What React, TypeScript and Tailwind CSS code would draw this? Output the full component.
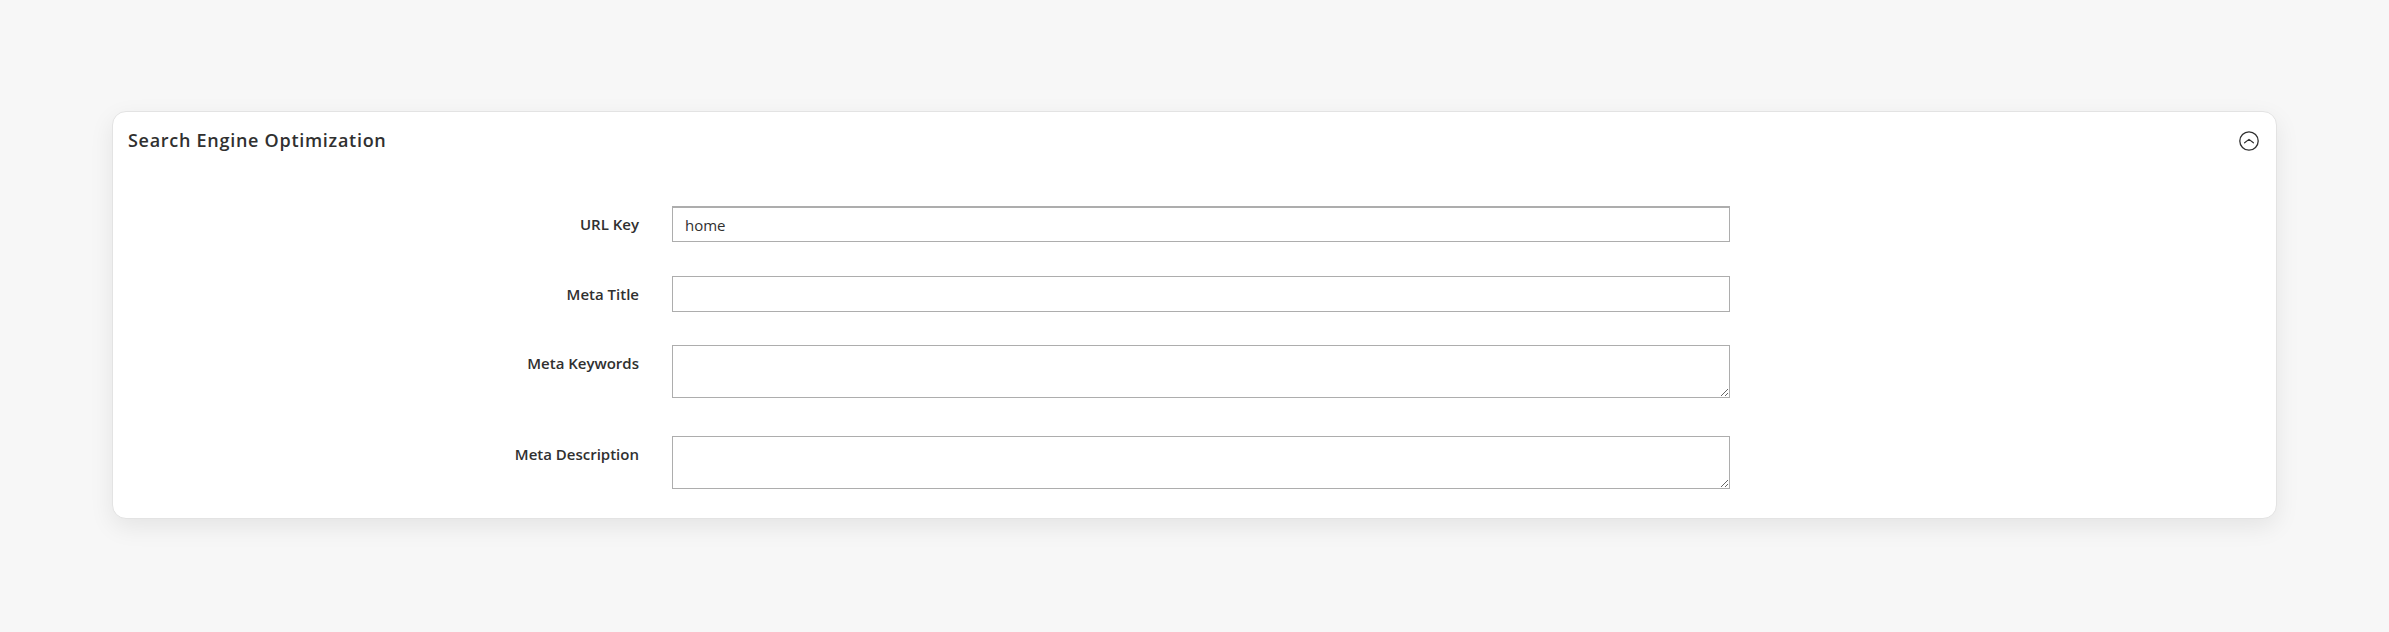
import React from "react";

const labelCls =
  "w-[559px] shrink-0 pr-[33px] text-right text-[15px] leading-[20px] font-semibold text-[#303030]";
const fieldCls =
  "w-[1058px] border border-[#adadad] bg-white px-[12px] text-[15px] text-[#303030] outline-none";

function CollapseIcon() {
  return (
    <svg width="20" height="20" viewBox="0 0 20 20" fill="none" aria-hidden="true">
      <circle cx="10" cy="10" r="9.2" stroke="#303030" strokeWidth="1.3" />
      <polyline
        points="5.6,11.8 10,8.4 14.4,11.8"
        stroke="#303030"
        strokeWidth="1.2"
        strokeLinecap="round"
        strokeLinejoin="round"
      />
    </svg>
  );
}

export default function App() {
  return (
    <div
      className="min-h-[632px] w-full bg-[#f7f7f7] px-[112px] pt-[111px]"
      style={{ fontFamily: '"Open Sans", "Noto Sans", sans-serif' }}
    >
      <section className="rounded-[14px] border border-[#e3e3e3] bg-white pb-[29px] shadow-[0_8px_24px_rgba(0,0,0,0.08)]">
        <header className="flex items-start justify-between pl-[15px] pr-[17px] pt-[16px]">
          <h2 className="text-[18px] font-semibold leading-[24px] tracking-[0.72px] text-[#303030]">
            Search Engine Optimization
          </h2>
          <button type="button" className="mt-[3px]">
            <CollapseIcon />
          </button>
        </header>

        <form className="mt-[54px] flex flex-col">
          <div className="flex items-start">
            <label className={`${labelCls} pt-[8px]`}>URL Key</label>
            <input className={`${fieldCls} h-[36px] border-t-2`} defaultValue="home" />
          </div>
          <div className="mt-[34px] flex items-start">
            <label className={`${labelCls} pt-[8px]`}>Meta Title</label>
            <input className={`${fieldCls} h-[36px]`} />
          </div>
          <div className="mt-[33px] flex items-start">
            <label className={`${labelCls} pt-[8px]`}>Meta Keywords</label>
            <textarea className={`${fieldCls} block h-[53px] py-[6px]`} />
          </div>
          <div className="mt-[38px] flex items-start">
            <label className={`${labelCls} pt-[8px]`}>Meta Description</label>
            <textarea className={`${fieldCls} block h-[53px] py-[6px]`} />
          </div>
        </form>
      </section>
    </div>
  );
}
